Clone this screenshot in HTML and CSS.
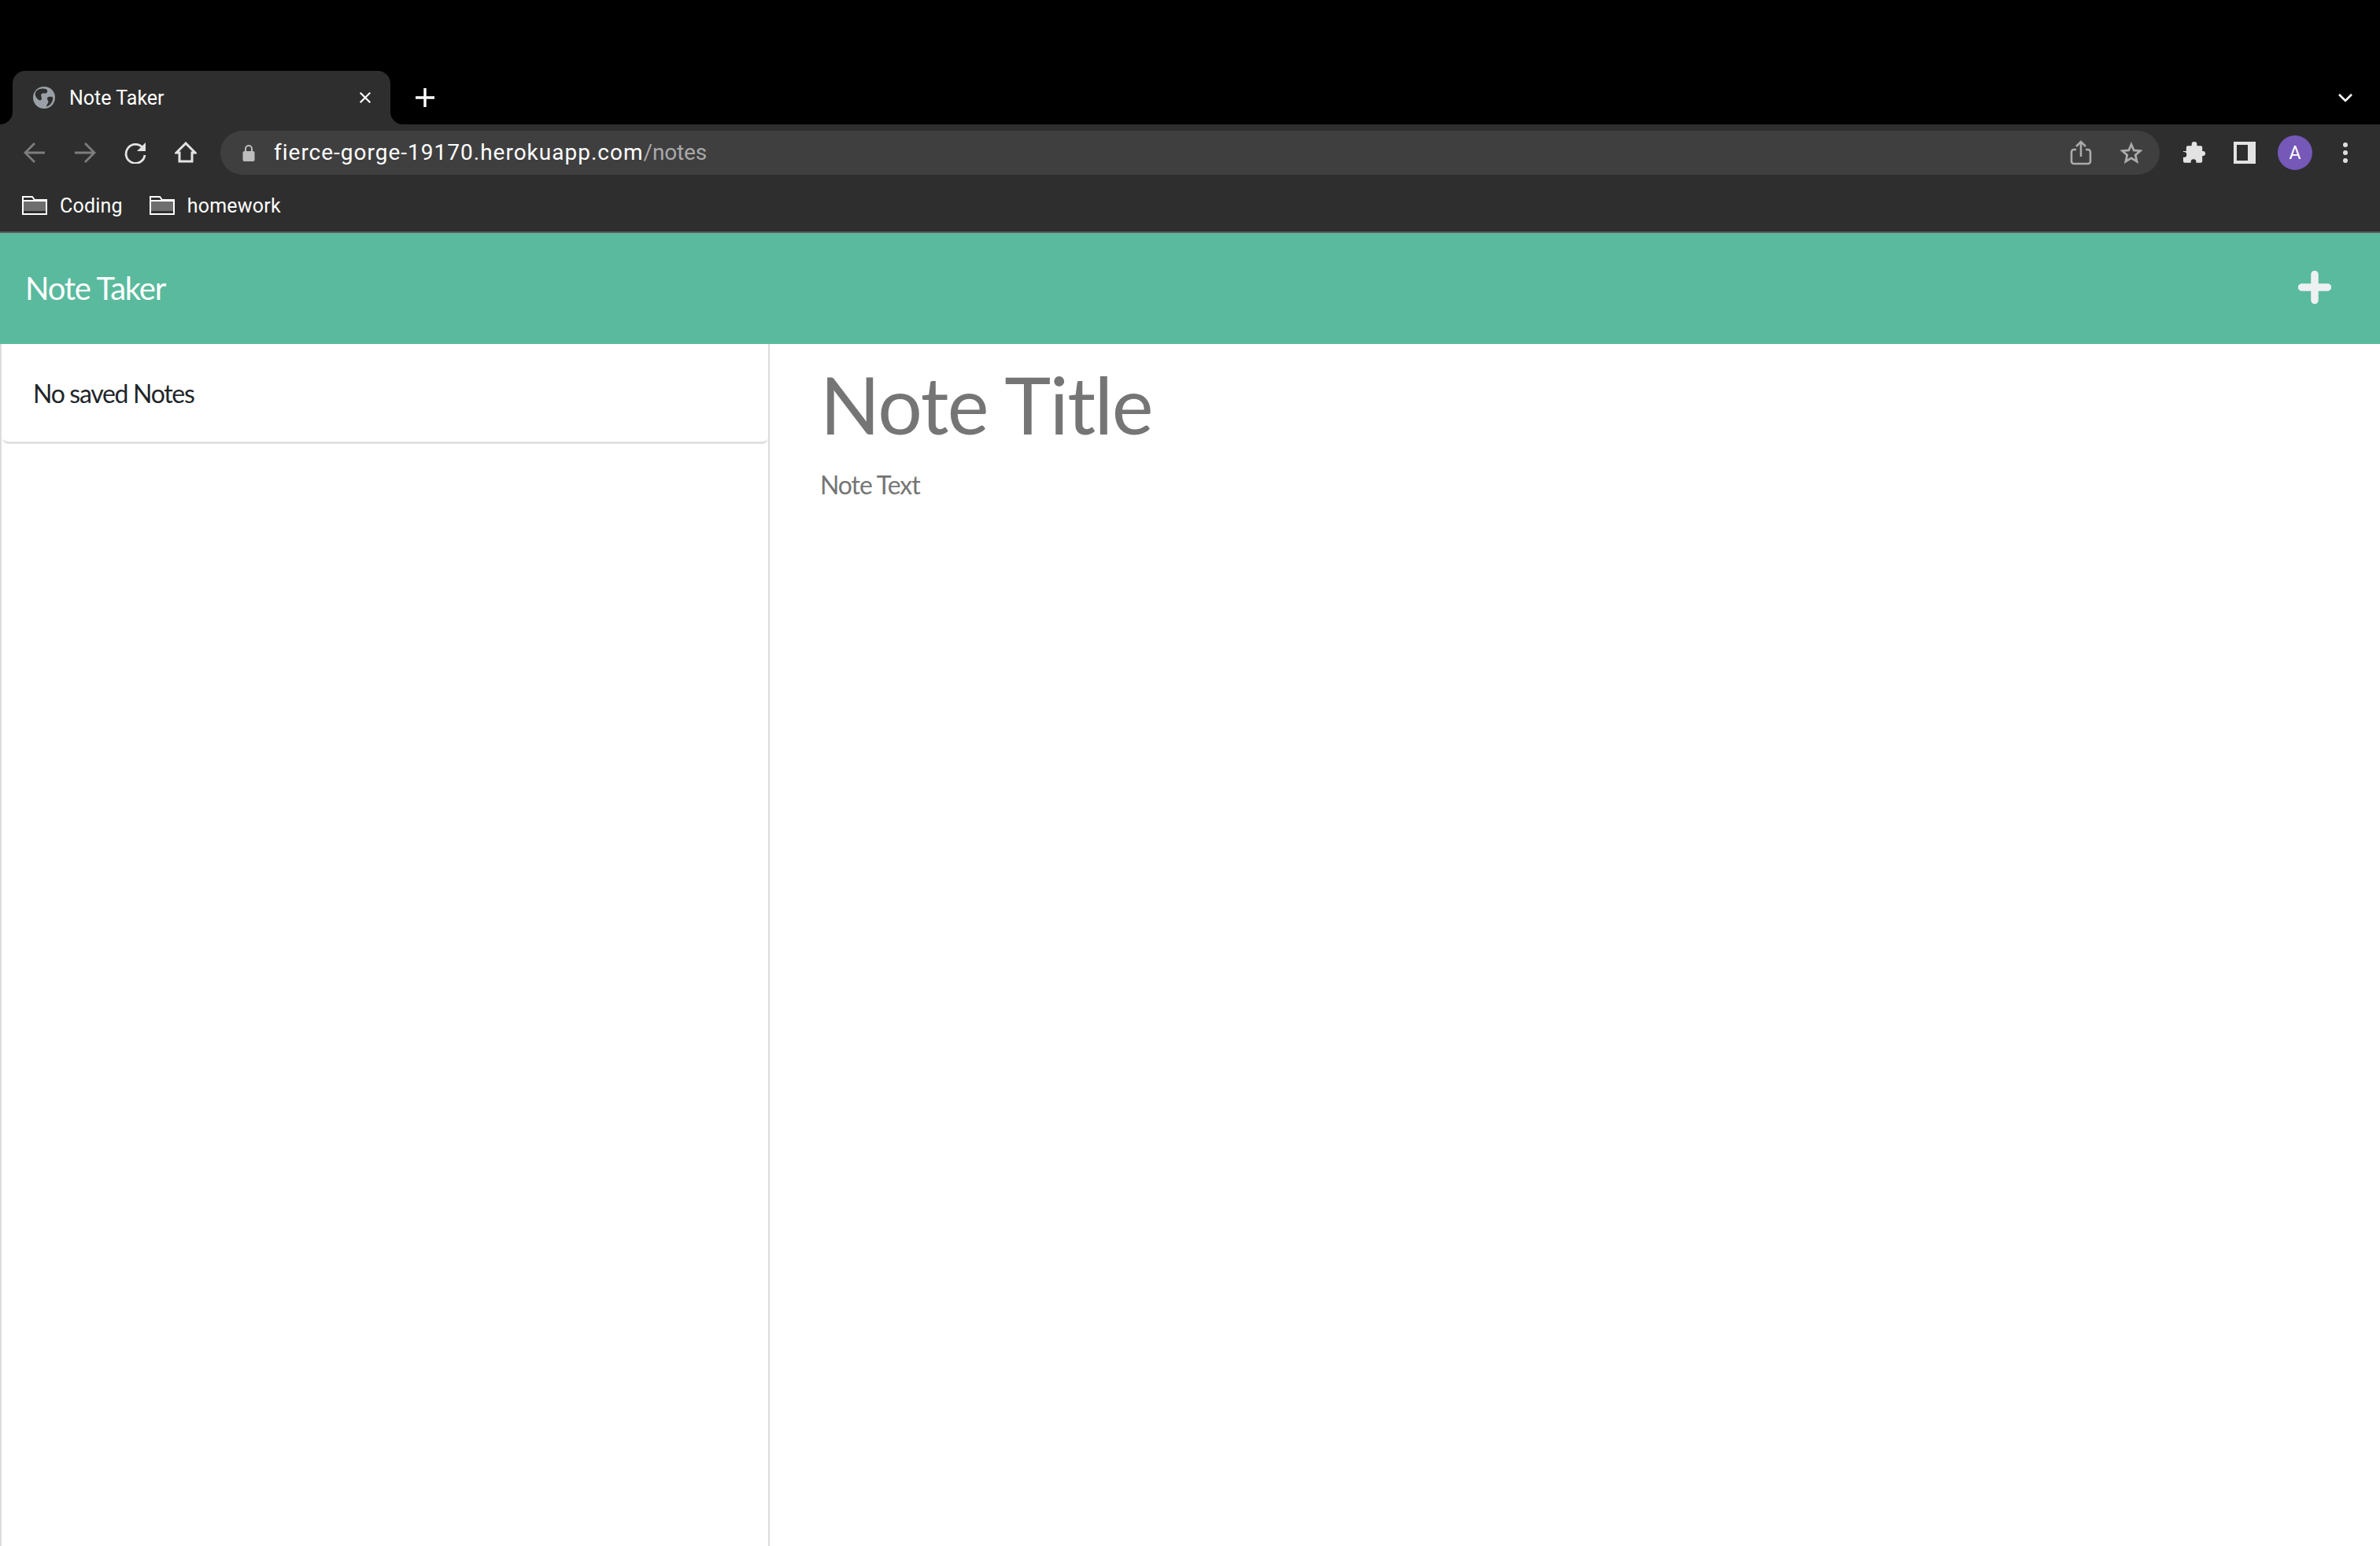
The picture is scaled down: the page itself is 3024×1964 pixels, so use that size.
FILE: index.html
```html
<!DOCTYPE html>
<html lang="en">
<head>
<meta charset="utf-8">
<title>Note Taker</title>
<link rel="stylesheet" href="styles.css">
</head>
<body>
<header class="chrome">
  <div class="tabstrip">
    <div class="tab">
      <svg class="globe" viewBox="0 0 28 28"><circle cx="14" cy="14" r="14" fill="#9aa0a6"/><path d="M4 6c3-3 8-4 11-3 2 1 3 3 1 5-2 1-5 0-6 2-1 3 2 4 1 7-1 2-4 1-6-1-3-3-4-7-1-10zM25 12c-3-1-6 0-7 2 0 3 3 3 2 6-1 2-2 4-1 5 5-3 7-8 6-13z" fill="#2e2e2e" transform="rotate(8 14 14)"/></svg>
      <span class="tab-title">Note Taker</span>
      <svg class="tab-close" viewBox="0 0 20 20"><path d="M3 3l14 14M17 3L3 17" stroke="#fff" stroke-width="2.4" fill="none"/></svg>
    </div>
    <svg class="newtab" viewBox="0 0 24 24"><path d="M12 0v24M0 12h24" stroke="#fff" stroke-width="3.4" fill="none"/></svg>
    <svg class="tablist" viewBox="0 0 20 14"><path d="M2 3l8 8 8-8" stroke="#fff" stroke-width="2.6" fill="none"/></svg>
  </div>
  <div class="toolbar">
    <span class="tool"><svg class="ico" viewBox="0 0 28 28"><path d="M27 14H3M14 2L2 14l12 12" stroke="#7d7d7d" stroke-width="2.8" fill="none"/></svg></span>
    <span class="tool"><svg class="ico" viewBox="0 0 28 28"><path d="M1 14h24M14 2l12 12-12 12" stroke="#7d7d7d" stroke-width="2.8" fill="none"/></svg></span>
    <span class="tool"><svg class="ico" viewBox="0 0 28 28"><path d="M23.5 8A12 12 0 1 0 26 17" stroke="#e3e3e3" stroke-width="2.8" fill="none"/><path d="M27 1v11H16z" fill="#e3e3e3"/></svg></span>
    <span class="tool"><svg class="ico" viewBox="0 0 28 28"><path d="M14 2L2 14h4v11h16V14h4z" stroke="#e3e3e3" stroke-width="3" fill="none" stroke-linejoin="miter"/></svg></span>
    <div class="omnibox">
      <svg class="lock" viewBox="0 0 16 22"><path d="M4 10V6a4 4 0 0 1 8 0v4" stroke="#bdbdbd" stroke-width="2" fill="none"/><rect x="0.500" y="9" width="15" height="13" rx="2" fill="#bdbdbd"/></svg>
      <span class="url">fierce-gorge-19170.herokuapp.com<span class="url-path">/notes</span></span>
      <svg class="omni-ico" viewBox="0 0 28 32"><path d="M8 12H5a3 3 0 0 0-3 3v12a3 3 0 0 0 3 3h18a3 3 0 0 0 3-3V15a3 3 0 0 0-3-3h-3M14 21V2M8 8l6-6 6 6" stroke="#ababab" stroke-width="2.600" fill="none"/></svg>
      <svg class="omni-ico" viewBox="0 0 32 32"><path d="M16 4l3.700 8.500 9.300.9-7 6.100 2.100 9.100-8.100-4.800-8.100 4.800 2.100-9.100-7-6.100 9.300-.9z" stroke="#ababab" stroke-width="3.200" fill="none"/></svg>
    </div>
    <span class="tool"><svg class="ico-lg" viewBox="0 0 30 30"><path d="M2 13h3V8a2 2 0 0 1 2-2h5V4a3.500 3.500 0 0 1 7 0v2h5a2 2 0 0 1 2 2v5h1a3 3 0 0 1 0 6h-1v7a2 2 0 0 1-2 2h-6v-1a3.500 3.500 0 0 0-7 0v1H3a2 2 0 0 1-2-2v-5h1a3.500 3.500 0 0 0 0-7H1v-1z" fill="#e3e3e3" transform="translate(0 .5) scale(.97)"/></svg></span>
    <span class="tool"><span class="sidepanel"></span></span>
    <span class="tool"><span class="avatar">A</span></span>
    <span class="tool"><span class="dots"><i></i><i></i><i></i></span></span>
  </div>
  <div class="bookmarks">
    <span class="bookmark"><svg class="folder" viewBox="0 0 32 24"><path d="M1 1h12l3 4h15v18H1z" fill="#2e2e2e" stroke="#fff" stroke-width="2"/><rect x="2" y="7" width="28" height="12" fill="#6e6e6e"/><path d="M1 6h30" stroke="#fff" stroke-width="2"/></svg>Coding</span>
    <span class="bookmark"><svg class="folder" viewBox="0 0 32 24"><path d="M1 1h12l3 4h15v18H1z" fill="#2e2e2e" stroke="#fff" stroke-width="2"/><rect x="2" y="7" width="28" height="12" fill="#6e6e6e"/><path d="M1 6h30" stroke="#fff" stroke-width="2"/></svg>homework</span>
  </div>
</header>
<nav class="navbar">
  <a class="brand">Note Taker</a>
  <svg class="add" viewBox="0 0 42 42"><path d="M21 4.500v33M4.500 21h33" stroke="#eef1f2" stroke-width="9.500" stroke-linecap="round" fill="none"/></svg>
</nav>
<main class="workspace">
  <aside class="sidebar">
    <div class="list-item">No saved Notes</div>
  </aside>
  <section class="editor">
    <div class="note-title">Note Title</div>
    <div class="note-text">Note Text</div>
  </section>
</main>
</body>
</html>
```
FILE: styles.css
```css
* { box-sizing: border-box; }
html, body { height: 100%; }
body {
  margin: 0;
  display: flex;
  flex-direction: column;
  height: 1964px;
  overflow: hidden;
  background: #fff;
  font-family: "Lato", sans-serif;
}
.chrome { background: #000; font-family: "Roboto", sans-serif; color: #fff; flex: none; }
.tabstrip { height: 158px; display: flex; align-items: flex-end; padding-left: 16px; padding-right: 32px; }
.tab {
  position: relative;
  width: 480px;
  height: 68px;
  background: #2e2e2e;
  border-radius: 16px 16px 0 0;
  display: flex;
  align-items: center;
  padding: 0 24px 0 26px;
}
.tab::before, .tab::after {
  content: "";
  position: absolute;
  bottom: 0;
  width: 16px;
  height: 16px;
}
.tab::before { left: -16px; background: radial-gradient(circle at 0 0, #000 15.500px, #2e2e2e 16.500px); }
.tab::after { right: -16px; background: radial-gradient(circle at 100% 0, #000 15.500px, #2e2e2e 16.500px); }
.globe { width: 28px; height: 28px; flex: none; }
.tab-title { margin-left: 18px; font-size: 25px; flex: 1; line-height: 1; }
.tab-close { width: 18px; height: 18px; flex: none; margin-right: -1px; }
.newtab { width: 24px; height: 24px; margin: 0 0 22px 32px; flex: none; }
.tablist { width: 20px; height: 14px; margin: 0 0 27px auto; flex: none; transform: translateX(-2px); }
.toolbar {
  height: 72px;
  background: #2e2e2e;
  display: flex;
  align-items: center;
  padding: 0 12px;
}
.tool { width: 64px; height: 56px; display: flex; align-items: center; justify-content: center; flex: none; }
.ico { width: 28px; height: 28px; }
.ico-lg { width: 30px; height: 30px; }
.omnibox {
  flex: 1;
  height: 56px;
  margin: 0 12px;
  border-radius: 28px;
  background: #3f3f3f;
  display: flex;
  align-items: center;
  padding: 0 22px 0 28px;
}
.lock { width: 16px; height: 22px; flex: none; }
.url { margin-left: 24px; font-size: 28px; flex: 1; color: #fff; line-height: 1; letter-spacing: 1px; }
.url-path { color: #a9a9a9; letter-spacing: -.15px; }
.omni-ico { width: 28px; height: 32px; margin-left: 36px; flex: none; }
.sidepanel { width: 28px; height: 28px; background: #e3e3e3; border: 4px solid #e3e3e3; display: flex; }
.sidepanel::before { content: ""; width: 14px; height: 20px; background: #2e2e2e; }
.avatar {
  width: 44px; height: 44px; border-radius: 50%;
  background: #7558b8;
  color: #fff; font-size: 23px;
  display: flex; align-items: center; justify-content: center;
}
.dots { display: flex; flex-direction: column; gap: 4px; }
.dots i { width: 6px; height: 6px; border-radius: 50%; background: #dedede; display: block; }
.bookmarks {
  height: 66px;
  background: #2e2e2e;
  border-bottom: 2px solid #5c5c5c;
  display: flex;
  align-items: center;
  padding: 0 0 2px 28px;
  gap: 34px;
  font-size: 25px;
  letter-spacing: .2px;
}
.bookmark { display: flex; align-items: center; gap: 16px; }
.folder { width: 32px; height: 24px; flex: none; }
.navbar {
  height: 141px;
  background: #5aba9d;
  flex: none;
  display: flex;
  align-items: center;
  justify-content: space-between;
  padding: 0 62px 0 32px;
}
.brand { color: #fff; font-size: 40px; letter-spacing: -1.25px; margin-top: -2px; }
.add { width: 42px; height: 42px; margin-top: -3px; }
.workspace { flex: 1; display: flex; min-height: 0; }
.sidebar { width: 978px; flex: none; border-left: 2px solid #dcdcdc; border-right: 2px solid #dcdcdc; padding: 0 0 0 1px; }
.list-item {
  height: 127px;
  display: flex;
  align-items: center;
  padding: 0 39px;
  font-size: 32px;
  color: #212529;
  letter-spacing: -1.3px;
  border-bottom: 3px solid #e0e0e0;
  border-radius: 0 0 8px 8px;
}
.editor { flex: 1; padding-left: 64px; color: #757575; }
.note-title { font-size: 100px; line-height: 1; padding-top: 26px; letter-spacing: -1.45px; }
.note-text { font-size: 32px; line-height: 1; margin-top: 37px; letter-spacing: -1.1px; }
```
